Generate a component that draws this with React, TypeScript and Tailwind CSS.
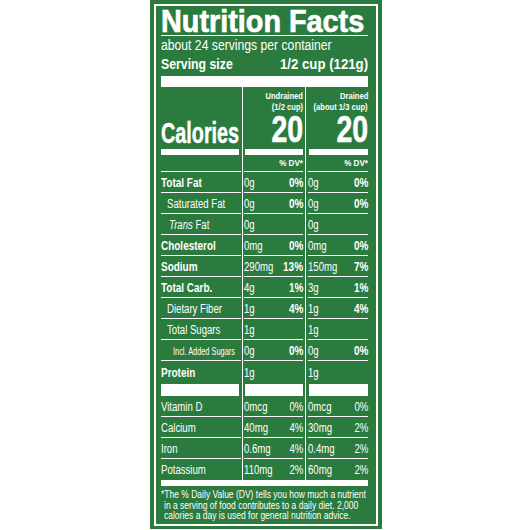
import type { ReactNode } from "react";

type Kind = "bold" | "sub" | "trans" | "small" | "plain";

type Nutrient = {
  label: ReactNode;
  kind: Kind;
  a: string;
  ap?: string;
  b: string;
  bp?: string;
  line?: boolean;
  h?: string;
};

// scaled text: Liberation Sans squeezed to look like a condensed face
function S({ children, className }: { children: ReactNode; className: string }) {
  return <span className={`inline-block whitespace-nowrap ${className}`}>{children}</span>;
}

const VL1 = () => <div className="ml-[1px] w-px bg-white" />;
const VL2 = () => <div className="ml-[2px] w-px bg-white" />;

const nutrients: Nutrient[] = [
  { label: "Total Fat", kind: "bold", a: "0g", ap: "0%", b: "0g", bp: "0%" },
  { label: "Saturated Fat", kind: "sub", a: "0g", ap: "0%", b: "0g", bp: "0%" },
  {
    label: (
      <>
        <i>Trans</i> Fat
      </>
    ),
    kind: "trans",
    a: "0g",
    b: "0g",
  },
  { label: "Cholesterol", kind: "bold", a: "0mg", ap: "0%", b: "0mg", bp: "0%" },
  { label: "Sodium", kind: "bold", a: "290mg", ap: "13%", b: "150mg", bp: "7%" },
  { label: "Total Carb.", kind: "bold", a: "4g", ap: "1%", b: "3g", bp: "1%" },
  { label: "Dietary Fiber", kind: "sub", a: "1g", ap: "4%", b: "1g", bp: "4%" },
  { label: "Total Sugars", kind: "sub", a: "1g", b: "1g" },
  { label: "Incl. Added Sugars", kind: "small", a: "0g", ap: "0%", b: "0g", bp: "0%" },
];

const vitamins: Nutrient[] = [
  { label: "Vitamin D", kind: "plain", a: "0mcg", ap: "0%", b: "0mcg", bp: "0%" },
  { label: "Calcium", kind: "plain", a: "40mg", ap: "4%", b: "30mg", bp: "2%" },
  { label: "Iron", kind: "plain", a: "0.6mg", ap: "4%", b: "0.4mg", bp: "2%" },
  { label: "Potassium", kind: "plain", a: "110mg", ap: "2%", b: "60mg", bp: "2%", line: false },
];

function Label({ n }: { n: Nutrient }) {
  if (n.kind === "bold")
    return <S className="origin-left scale-x-[0.83] font-bold">{n.label}</S>;
  if (n.kind === "sub")
    return <S className="ml-[6px] origin-left scale-x-[0.8]">{n.label}</S>;
  if (n.kind === "trans")
    return <S className="ml-[8px] origin-left scale-x-[0.8]">{n.label}</S>;
  if (n.kind === "small")
    return <S className="ml-[12px] origin-left scale-x-[0.67] text-[11px]">{n.label}</S>;
  return <S className="origin-left scale-x-[0.8]">{n.label}</S>;
}

function Value({ v, p, bold, w, line }: { v: string; p?: string; bold: boolean; w: string; line: boolean }) {
  return (
    <div className={`flex ${w} ${line ? "border-b border-white" : ""}`}>
      <div className="min-w-0 flex-1">
        <S className="origin-left scale-x-[0.8]">{v}</S>
      </div>
      {p && (
        <S className={bold ? "origin-right scale-x-[0.83] font-bold" : "origin-right scale-x-[0.8]"}>{p}</S>
      )}
    </div>
  );
}

function Row({ n, bold }: { n: Nutrient; bold: boolean }) {
  const line = n.line !== false;
  return (
    <div className={`flex ${n.h ?? "h-[21px]"} text-[12px] ${n.h ? "leading-[24px]" : "leading-[22px]"}`}>
      <div className={`w-[80px] ${line ? "border-b border-white" : ""}`}>
        <Label n={n} />
      </div>
      <VL1 />
      <div className="ml-[1px] flex">
        <Value v={n.a} p={n.ap} bold={bold} w="w-[59px]" line={line} />
      </div>
      <VL2 />
      <div className="ml-[2px] flex">
        <Value v={n.b} p={n.bp} bold={bold} w="w-[60px]" line={line} />
      </div>
    </div>
  );
}

function BarRow({ h }: { h: string }) {
  return (
    <div className={`flex ${h}`}>
      <div className="mr-[2px] w-[78px] bg-white" />
      <VL1 />
      <div className="ml-[2px] w-[58px] bg-white" />
      <VL2 />
      <div className="ml-[3px] w-[59px] bg-white" />
    </div>
  );
}

function HeadCol({ w, l1, l2 }: { w: string; l1: string; l2: string }) {
  return (
    <div className={`flex ${w} flex-col items-end pt-[4px]`}>
      <div className="text-[9.5px] font-bold leading-[10.5px]">
        <S className="origin-right scale-x-[0.8]">{l1}</S>
      </div>
      <div className="text-[9.5px] font-bold leading-[10.5px]">
        <S className="origin-right scale-x-[0.8]">{l2}</S>
      </div>
      <div className="mt-px text-[37px] font-bold leading-[34px] [-webkit-text-stroke:0.6px_white]">
        <S className="origin-right scale-x-[0.77]">20</S>
      </div>
    </div>
  );
}

export default function App() {
  return (
    <div className="h-[530px] w-[530px] bg-white font-['Liberation_Sans',Arial,sans-serif] text-white">
      <div className="ml-[150px] h-[529px] w-[232px] bg-[#2b7b3f] px-[4px] pt-[4px] pb-[3px]">
        <div className="flex h-full flex-col border-2 border-white pl-[5px] pr-[8px]">
          <div className="pt-px text-[32px] font-bold leading-[28px] [-webkit-text-stroke:0.7px_white]">
            <S className="origin-left scale-x-[0.9]">Nutrition Facts</S>
          </div>
          <div className="h-px bg-white" />
          <div className="mt-[2px] text-[14px] leading-[14px]">
            <S className="origin-left scale-x-[0.87]">about 24 servings per container</S>
          </div>
          <div className="mt-[4px] flex justify-between text-[15px] font-bold leading-[15px]">
            <S className="origin-left scale-x-[0.82]">Serving size</S>
            <S className="origin-right scale-x-[0.88]">1/2 cup (121g)</S>
          </div>
          <div className="mt-[5px] h-[11px] bg-white" />

          {/* table */}
          <div className="flex h-[62px]">
            <div className="w-[80px] pt-[31px] text-[30px] font-bold leading-[30px] [-webkit-text-stroke:0.5px_white]">
              <S className="origin-left scale-x-[0.66]">Calories</S>
            </div>
            <VL1 />
            <div className="ml-[1px] flex">
              <HeadCol w="w-[59px]" l1="Undrained" l2="(1/2 cup)" />
            </div>
            <VL2 />
            <div className="ml-[2px] flex">
              <HeadCol w="w-[60px]" l1="Drained" l2="(about 1/3 cup)" />
            </div>
          </div>
          <BarRow h="h-[6px]" />
          <div className="flex h-[17px] text-[9.5px] font-bold leading-[16px]">
            <div className="w-[80px] border-b border-white" />
            <VL1 />
            <div className="ml-[1px] w-[59px] border-b border-white text-right">
              <S className="origin-right scale-x-[0.85]">% DV*</S>
            </div>
            <VL2 />
            <div className="ml-[2px] w-[60px] border-b border-white text-right">
              <S className="origin-right scale-x-[0.85]">% DV*</S>
            </div>
          </div>
          {nutrients.map((n, i) => (
            <Row key={i} n={n} bold />
          ))}
          <Row n={{ label: "Protein", kind: "bold", a: "1g", b: "1g", line: false, h: "h-[23px]" }} bold />
          <BarRow h="h-[12px]" />
          {vitamins.map((n, i) => (
            <Row key={i} n={n} bold={false} />
          ))}
          <div className="h-[6px] bg-white" />

          <div className="mt-[4px] text-[10px] leading-[10.7px]">
            <div>
              <S className="origin-left scale-x-[0.85]">*The % Daily Value (DV) tells you how much a nutrient</S>
            </div>
            <div className="pl-[3px]">
              <S className="origin-left scale-x-[0.85]">in a serving of food contributes to a daily diet. 2,000</S>
            </div>
            <div className="pl-[3px]">
              <S className="origin-left scale-x-[0.85]">calories a day is used for general nutrition advice.</S>
            </div>
          </div>
        </div>
      </div>
    </div>
  );
}
